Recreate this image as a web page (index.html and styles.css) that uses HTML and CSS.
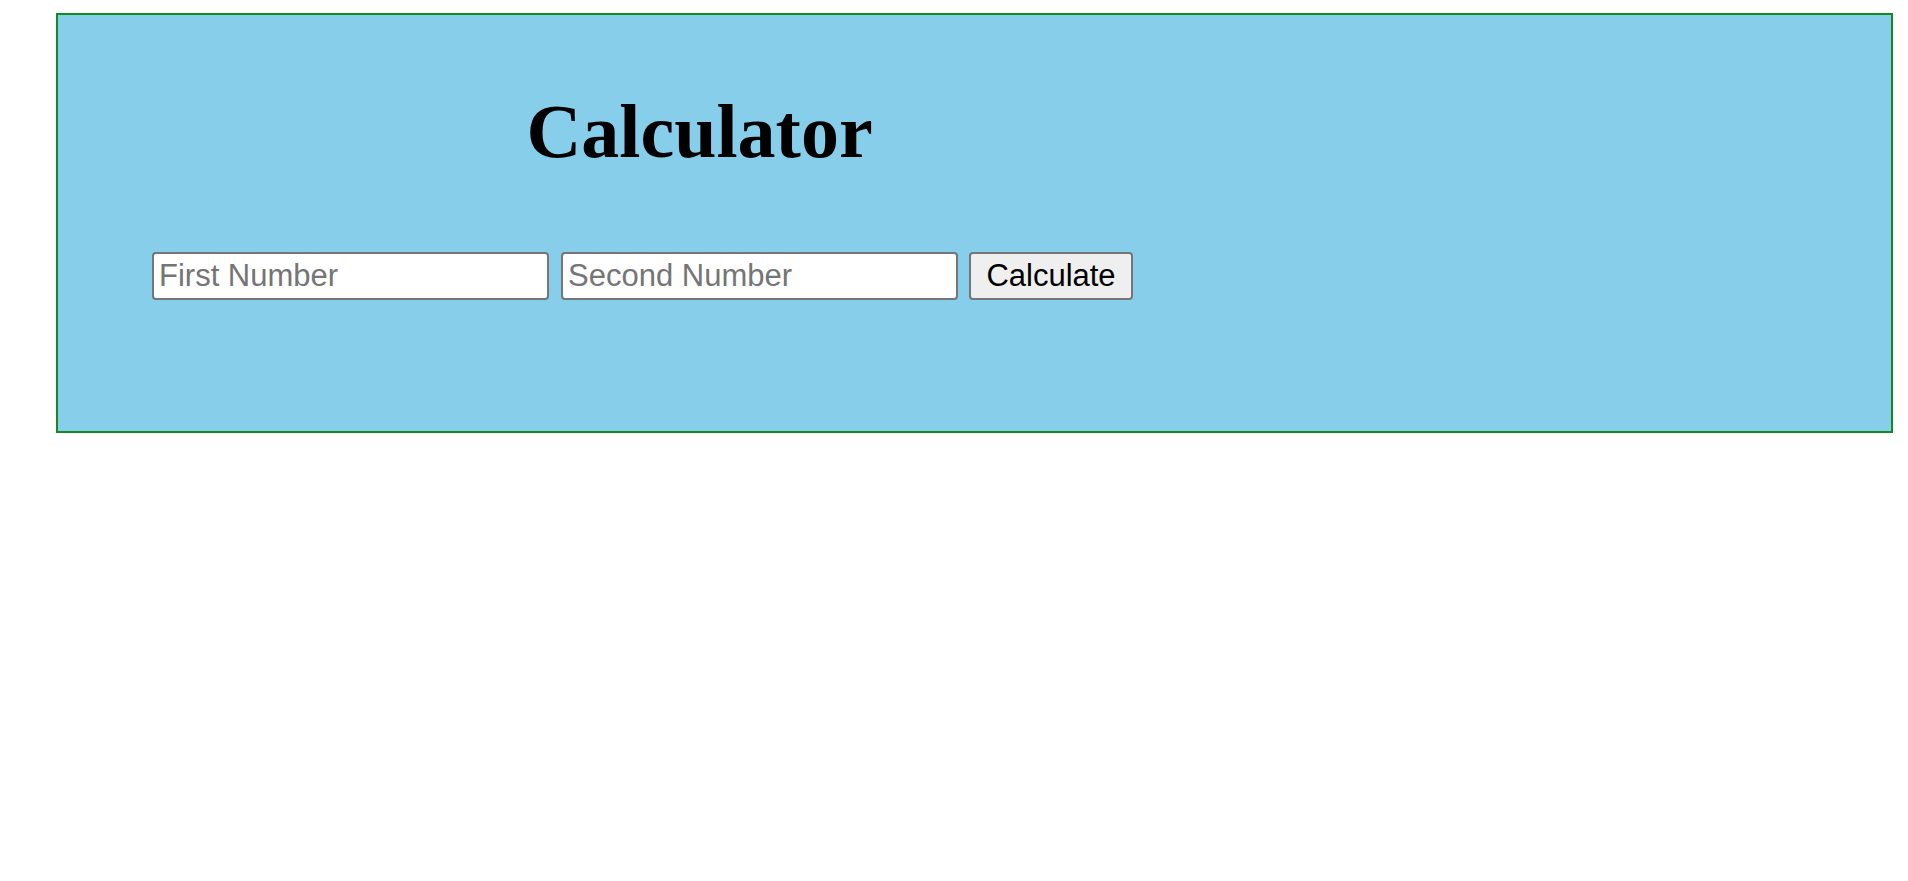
FILE: index.html
```html
<!DOCTYPE html>
<html>
<head>
<meta charset="utf-8">
<title>Calculator</title>
<link rel="stylesheet" href="styles.css">
</head>
<body>
<div class="calc">
  <h1 class="title">Calculator</h1>
  <div class="row">
    <input class="field" type="text" placeholder="First Number">
    <input class="field" type="text" placeholder="Second Number">
    <button class="btn" type="button">Calculate</button>
  </div>
</div>
</body>
</html>
```
FILE: styles.css
```css
html, body {
  margin: 0;
  padding: 0;
  background: #ffffff;
}
body {
  font-family: "Liberation Serif", "Times New Roman", serif;
}
.calc {
  margin: 13px 15px 0 56px;
  height: 420px;
  box-sizing: border-box;
  border: 2px solid #138a22;
  background: #87ceeb;
  padding: 0;
}
.title {
  width: 70%;
  margin: 74px 0 0 0;
  text-align: center;
  font-size: 76px;
  line-height: 85px;
  font-weight: bold;
  color: #000;
}
.row {
  display: flex;
  align-items: flex-start;
  gap: 12px;
  margin-top: 78px;
  padding-left: 94px;
}
.field, .btn {
  font-family: "Liberation Sans", Arial, sans-serif;
  font-size: 31px;
  height: 48px;
  box-sizing: border-box;
  border: 2px solid #767676;
  border-radius: 4px;
  margin: 0;
}
.field {
  width: 397px;
  padding: 0 5px;
  background: #fff;
  color: #000;
}
.field::placeholder {
  color: #757575;
}
.btn {
  width: 164px;
  padding: 0;
  background: #efefef;
  color: #000;
  text-align: center;
  margin-left: -1px;
}
```
